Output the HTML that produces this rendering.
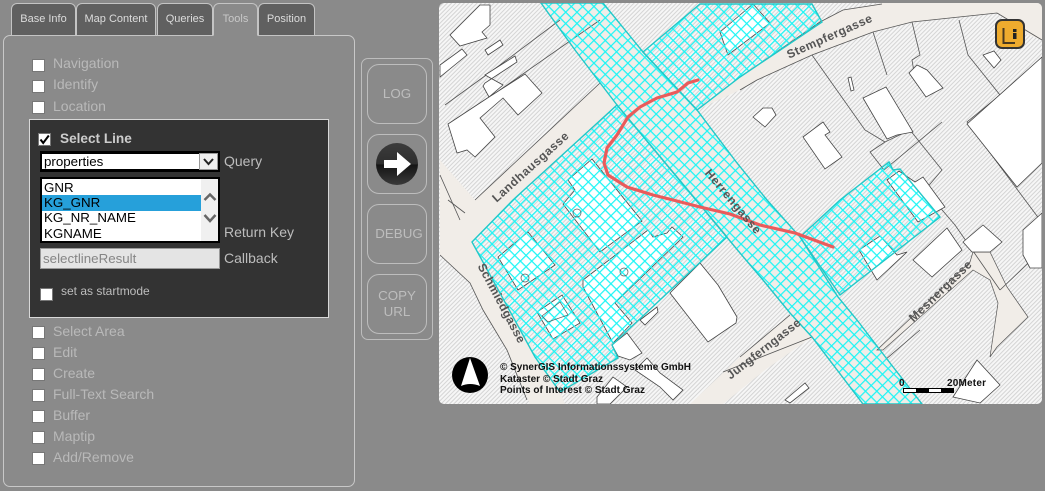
<!DOCTYPE html>
<html><head><meta charset="utf-8"><style>
html,body{margin:0;padding:0;width:1045px;height:491px;overflow:hidden;background:#8a8a8a;font-family:"Liberation Sans",sans-serif}
.a{position:absolute}
.tab{position:absolute;top:3px;height:31px;background:#606060;border:1px solid #c4c4c4;border-radius:6px 6px 0 0;color:#dcdcdc;font-size:11px;text-align:center;line-height:31px;box-sizing:content-box}
.cb{position:absolute;width:11px;height:11px;background:#fff;border:1px solid #777}
.l{position:absolute;left:53px;color:#b9b9b9;font-size:14px;line-height:16px}
.lb{position:absolute;color:#bdbdbd;font-size:14px;line-height:16px}
.btn{position:absolute;left:367px;width:58px;height:58px;border:1px solid #bdbdbd;border-radius:12px;color:#bdbdbd;font-size:13.33px;text-align:center;box-sizing:content-box}
.it{position:absolute;left:44px;color:#000;font-size:13.33px;line-height:15px}
</style></head><body>
<div class="a" style="left:3px;top:35px;width:350px;height:450px;border:1px solid #c8c8c8;border-radius:7px"></div>
<div class="tab" style="left:11px;width:63px">Base Info</div>
<div class="tab" style="left:76px;width:78px">Map Content</div>
<div class="tab" style="left:157px;width:54px">Queries</div>
<div class="tab" style="left:213px;width:43px;background:#8a8a8a;border-bottom-color:#8a8a8a;color:#c8c8c8">Tools</div>
<div class="tab" style="left:258px;width:55px">Position</div>

<div class="cb" style="left:32px;top:59px"></div><div class="l" style="top:55px">Navigation</div>
<div class="cb" style="left:32px;top:80px"></div><div class="l" style="top:76px">Identify</div>
<div class="cb" style="left:32px;top:101px"></div><div class="l" style="top:98px">Location</div>

<div class="a" style="left:29px;top:119px;width:298px;height:197px;background:#333;border:1px solid #d8d8d8"></div>
<div class="cb" style="left:38px;top:133px;background:#fff"></div>
<svg class="a" style="left:38px;top:133px" width="13" height="13"><path d="M2.500 6.500L5.200 10L10.800 2.500" fill="none" stroke="#000" stroke-width="2"/></svg>
<div class="a" style="left:60px;top:131px;color:#ccc;font-size:13.600px;font-weight:bold;line-height:16px;">Select Line</div>

<div class="a" style="left:40px;top:151px;width:176px;height:15px;background:#fff;border:2px solid #000;border-width:3px 2px"></div>
<div class="a" style="left:44px;top:154px;font-size:13.33px;line-height:15px;color:#000">properties</div>
<div class="a" style="left:199px;top:153px;width:19px;height:17px;background:#eee;border:1px solid #999;box-sizing:border-box"></div>
<svg class="a" style="left:199px;top:153px" width="19" height="17"><path d="M5 6L9.500 11L14 6" fill="none" stroke="#222" stroke-width="2"/></svg>
<div class="lb" style="left:224px;top:153px">Query</div>

<div class="a" style="left:40px;top:177px;width:176px;height:62px;background:#fff;border:2px solid #000"></div>
<div class="a" style="left:42px;top:195px;width:159px;height:16px;background:#26a0da"></div>
<div class="a" style="left:201px;top:179px;width:17px;height:62px;background:#f0f0f0"></div>
<div class="it" style="top:180px">GNR</div>
<div class="it" style="top:195px">KG_GNR</div>
<div class="it" style="top:210px">KG_NR_NAME</div>
<div class="it" style="top:226px">KGNAME</div>
<svg class="a" style="left:201px;top:190px" width="17" height="40"><path d="M3.500 10L9 4.500L14.500 10" fill="none" stroke="#666" stroke-width="2.500"/><path d="M3.500 25L9 31L14.500 25" fill="none" stroke="#666" stroke-width="2.500"/></svg>
<div class="lb" style="left:224px;top:224px">Return Key</div>

<div class="a" style="left:40px;top:248px;width:178px;height:19px;background:#e4e4e4;border:1px solid #999;color:#858585;font-size:13.33px;line-height:19px;text-indent:2px">selectlineResult</div>
<div class="lb" style="left:224px;top:250px">Callback</div>
<div class="cb" style="left:40px;top:288px"></div>
<div class="a" style="left:61px;top:284px;color:#bdbdbd;font-size:12px;line-height:15px">set as startmode</div>

<div class="cb" style="left:32px;top:326px"></div><div class="l" style="top:323px">Select Area</div>
<div class="cb" style="left:32px;top:347px"></div><div class="l" style="top:344px">Edit</div>
<div class="cb" style="left:32px;top:368px"></div><div class="l" style="top:365px">Create</div>
<div class="cb" style="left:32px;top:389px"></div><div class="l" style="top:386px">Full-Text Search</div>
<div class="cb" style="left:32px;top:410px"></div><div class="l" style="top:407px">Buffer</div>
<div class="cb" style="left:32px;top:431px"></div><div class="l" style="top:428px">Maptip</div>
<div class="cb" style="left:32px;top:452px"></div><div class="l" style="top:449px">Add/Remove</div>

<div class="a" style="left:361px;top:58px;width:70px;height:280px;border:1px solid #bdbdbd;border-radius:7px"></div>
<div class="btn" style="top:64px;line-height:57px">LOG</div>
<div class="btn" style="top:134px"></div>
<svg class="a" style="left:375px;top:142px" width="44" height="44"><defs><linearGradient id="g" x1="0" y1="0" x2="0" y2="1"><stop offset="0" stop-color="#3c3c3c"/><stop offset=".5" stop-color="#2e2e2e"/><stop offset=".52" stop-color="#141414"/><stop offset="1" stop-color="#3a3a3a"/></linearGradient></defs><circle cx="22" cy="22" r="21" fill="url(#g)"/><path d="M9 18H22V10L36 22L22 34V26H9Z" fill="#fff"/></svg>
<div class="btn" style="top:204px;line-height:57px;text-indent:4px">DEBUG</div>
<div class="btn" style="top:274px;line-height:16px"><div style="padding-top:13px">COPY<br>URL</div></div>

<svg class="a" style="left:439px;top:3px;border-radius:5px" width="603" height="401" viewBox="439 3 603 401" font-family="Liberation Sans">
<defs>
<pattern id="h" width="3" height="3" patternUnits="userSpaceOnUse" patternTransform="rotate(45)"><rect width="3" height="3" fill="#f6f6f6"/><rect width="1" height="3" fill="#d4d4d4"/></pattern>
<pattern id="c" width="8" height="8" patternUnits="userSpaceOnUse" patternTransform="rotate(45)"><path d="M0 0H8M0 0V8" stroke="#1cf5f5" stroke-width="2.400" fill="none"/></pattern>
</defs>
<rect x="439" y="3" width="603" height="401" fill="url(#h)"/>
<!-- streets -->
<g fill="#f1ede8" stroke="#555" stroke-width=".7">
<path d="M475 200L600 83L617 105L513 200L475 240Z" stroke="none"/>
<path d="M697 110L740 90L757 80L812 55L873 32L912 22L997 13L1023 33L1042 40V3H882L843 10L820 22L740 77Z" stroke="none"/>
<path d="M440 160L475 200L513 200L472 242L560 392L565 404H530L507 350L483 310L470 283L440 255Z" stroke="none"/>
<path d="M541 3H603L643 52L697 110L737 163L767 200L800 237L838 297L857 320L890 363L922 404H863L812 337L790 313L763 280L740 253L617 105L575 50Z" stroke="none"/>
<path d="M690 404L740 357L790 315L812 337L765 370L723 404Z" stroke="none"/>
<path d="M877 350L970 262L973 252L990 252L1007 287L1028 317L997 347L990 357L998 303L990 280L973 270L883 350Z"/>
</g>
<g fill="none" stroke="#555" stroke-width=".8">
<path d="M475 200L600 83M513 200L617 105M740 90L757 80L812 55L873 32L912 22L997 13M740 77L820 22L843 10L882 4M997 13L1042 40"/>
<path d="M440 255L470 283L483 310L507 350L527 400M448 200L465 213"/>
<path d="M723 372L812 337M740 357L790 315"/>
<path d="M912 22L920 55L912 60L914 72L925 75M959 20L968 55L1000 95L1040 60M812 55L865 130L885 142L910 130L942 170L925 190L955 225L1000 290M873 32L887 75M968 55L1000 95L967 122L1040 220M885 142L870 152L884 170L942 122"/>
<path d="M1000 290L1042 250M885 360L920 330M445 105L500 65L560 20M500 90L600 20M440 175L460 220"/>
</g>
<!-- buildings -->
<g fill="#fff" stroke="#444" stroke-width=".8">
<path d="M455 30L480 5L490 5L490 25L482 32L487 38L460 46L450 35Z"/>
<path d="M440 65L462 49L467 55L440 77Z"/>
<path d="M485 50L500 40L503 45L488 55Z"/>
<path d="M485 75L515 56L517 62L485 83L483 86L489 97L503 85Z"/>
<path d="M448 124L489 97L525 74L542 93L518 115L503 98L480 118L495 137L475 157L467 150L457 153Z"/>
<path d="M568 180L592 159L642 221L600 252L563 204L575 190Z"/>
<path d="M498 257L528 232L555 265L518 290Z"/>
<path d="M583 280L648 230L653 237L667 233L672 227L683 237L615 303L632 323L613 343L583 287Z"/>
<path d="M537 312L562 295L580 323L553 339Z"/>
<path d="M670 293L700 263L718 285L737 317L736 323L708 342Z"/>
<path d="M612 345L627 333L642 353L630 360L618 356Z"/>
<path d="M640 320L657 307L658 312L645 325Z"/>
<path d="M635 370L647 358L660 373L683 390L673 400L660 387Z"/>
<path d="M597 397L613 377L627 387L610 404H597Z"/>
<path d="M913 260L947 228L962 250L932 277Z"/>
<path d="M963 242L983 225L1002 242L990 252L972 252Z"/>
<path d="M859 250L880 236L897 255L907 252L877 280Z"/>
<path d="M953 397L977 360L1000 385L980 403Z"/>
<path d="M785 400L805 383L809 388L790 403Z"/>
<path d="M1023 230L1042 213V268H1030L1023 255Z"/>
<path d="M863 98L886 87L913 132L897 135L887 139Z"/>
<path d="M803 137L823 122L830 132L825 135L842 157L825 169Z"/>
<path d="M753 117L763 108L772 108L776 115L765 127Z"/>
<path d="M848 78L851 77L854 90L851 91Z"/>
<path d="M909 73L917 65L927 70L943 88L926 97Z"/>
<path d="M983 55L994 51L1001 60L994 68Z"/>
<path d="M967 124L1042 57V163L1017 187Z"/>
<path d="M887 180L899 171L915 182L923 177L945 207L918 222Z"/>
<path d="M720 32L753 4L770 23L728 55Z"/>
</g>
<!-- cyan -->
<g fill="url(#c)" stroke="#22c8c8" stroke-width="1.400">
<path d="M643 52L700 4L812 4L822 22L740 77L697 110Z"/>
<path d="M617 105L513 200L472 242L535 357L560 392L618 358L612 345L727 237Z"/>
<path d="M800 237L840 200L889 162L893 170L900 169L940 217L840 295Z"/>
<path d="M541 3H603L643 52L697 110L737 163L767 200L800 237L838 297L857 320L890 363L922 404H863L812 337L790 313L763 280L740 253L617 105L575 50Z"/>
</g>
<g fill="none" stroke="#555" stroke-width=".7">
<circle cx="577" cy="213" r="4"/><circle cx="525" cy="278" r="4"/><circle cx="624" cy="272" r="4"/>
<path d="M542 316L560 302L568 315L548 322Z"/>
</g>
<!-- red line -->
<path d="M698 80L688 83L677 92L657 98L640 107L628 117L617 135L607 148L604 163L608 175L627 187L653 195L673 200L700 207L730 214L760 225L795 233L833 247" fill="none" stroke="#ea5b5b" stroke-width="3.200" stroke-linejoin="round" stroke-linecap="round"/>
<!-- labels -->
<g font-weight="bold" font-size="12" fill="#555" text-anchor="middle">
<text transform="translate(533,170) rotate(-42)" textLength="98">Landhausgasse</text>
<text transform="translate(831,40) rotate(-24)" textLength="92">Stempfergasse</text>
<text transform="translate(730,204) rotate(50)" textLength="80">Herrengasse</text>
<text transform="translate(498,305) rotate(62)" textLength="88">Schmiedgasse</text>
<text transform="translate(766,352) rotate(-38)" textLength="90">Jungferngasse</text>
<text transform="translate(943,294) rotate(-44)" textLength="82">Mesnergasse</text>
</g>
<!-- attribution -->
<g font-weight="bold" font-size="10" fill="#111">
<text x="500" y="370" textLength="191">© SynerGIS Informationssysteme GmbH</text>
<text x="500" y="382" textLength="103">Kataster © Stadt Graz</text>
<text x="500" y="393" textLength="145">Points of Interest © Stadt Graz</text>
<text x="899" y="386" font-size="10">0</text>
<text x="947" y="386" font-size="10" textLength="39">20Meter</text>
</g>
<rect x="903.500" y="388.500" width="50" height="4" fill="#fff" stroke="#000"/>
<rect x="916" y="388" width="13" height="5" fill="#000"/><rect x="941" y="388" width="13" height="5" fill="#000"/>
<circle cx="470" cy="375" r="18" fill="#000"/>
<path d="M470 358L461 386Q470 382 480 386Z" fill="#fff"/>
<!-- Li -->
<rect x="996" y="20" width="28" height="28" rx="6" fill="#eeab2e" stroke="#333" stroke-width="2"/>
<path d="M1003.500 28V43H1015" fill="none" stroke="#4a3a20" stroke-width="2"/>
<rect x="1013" y="29" width="3.500" height="3" fill="#222"/>
<rect x="1013" y="33" width="3.500" height="6" fill="#222"/>
</svg>
</body></html>
